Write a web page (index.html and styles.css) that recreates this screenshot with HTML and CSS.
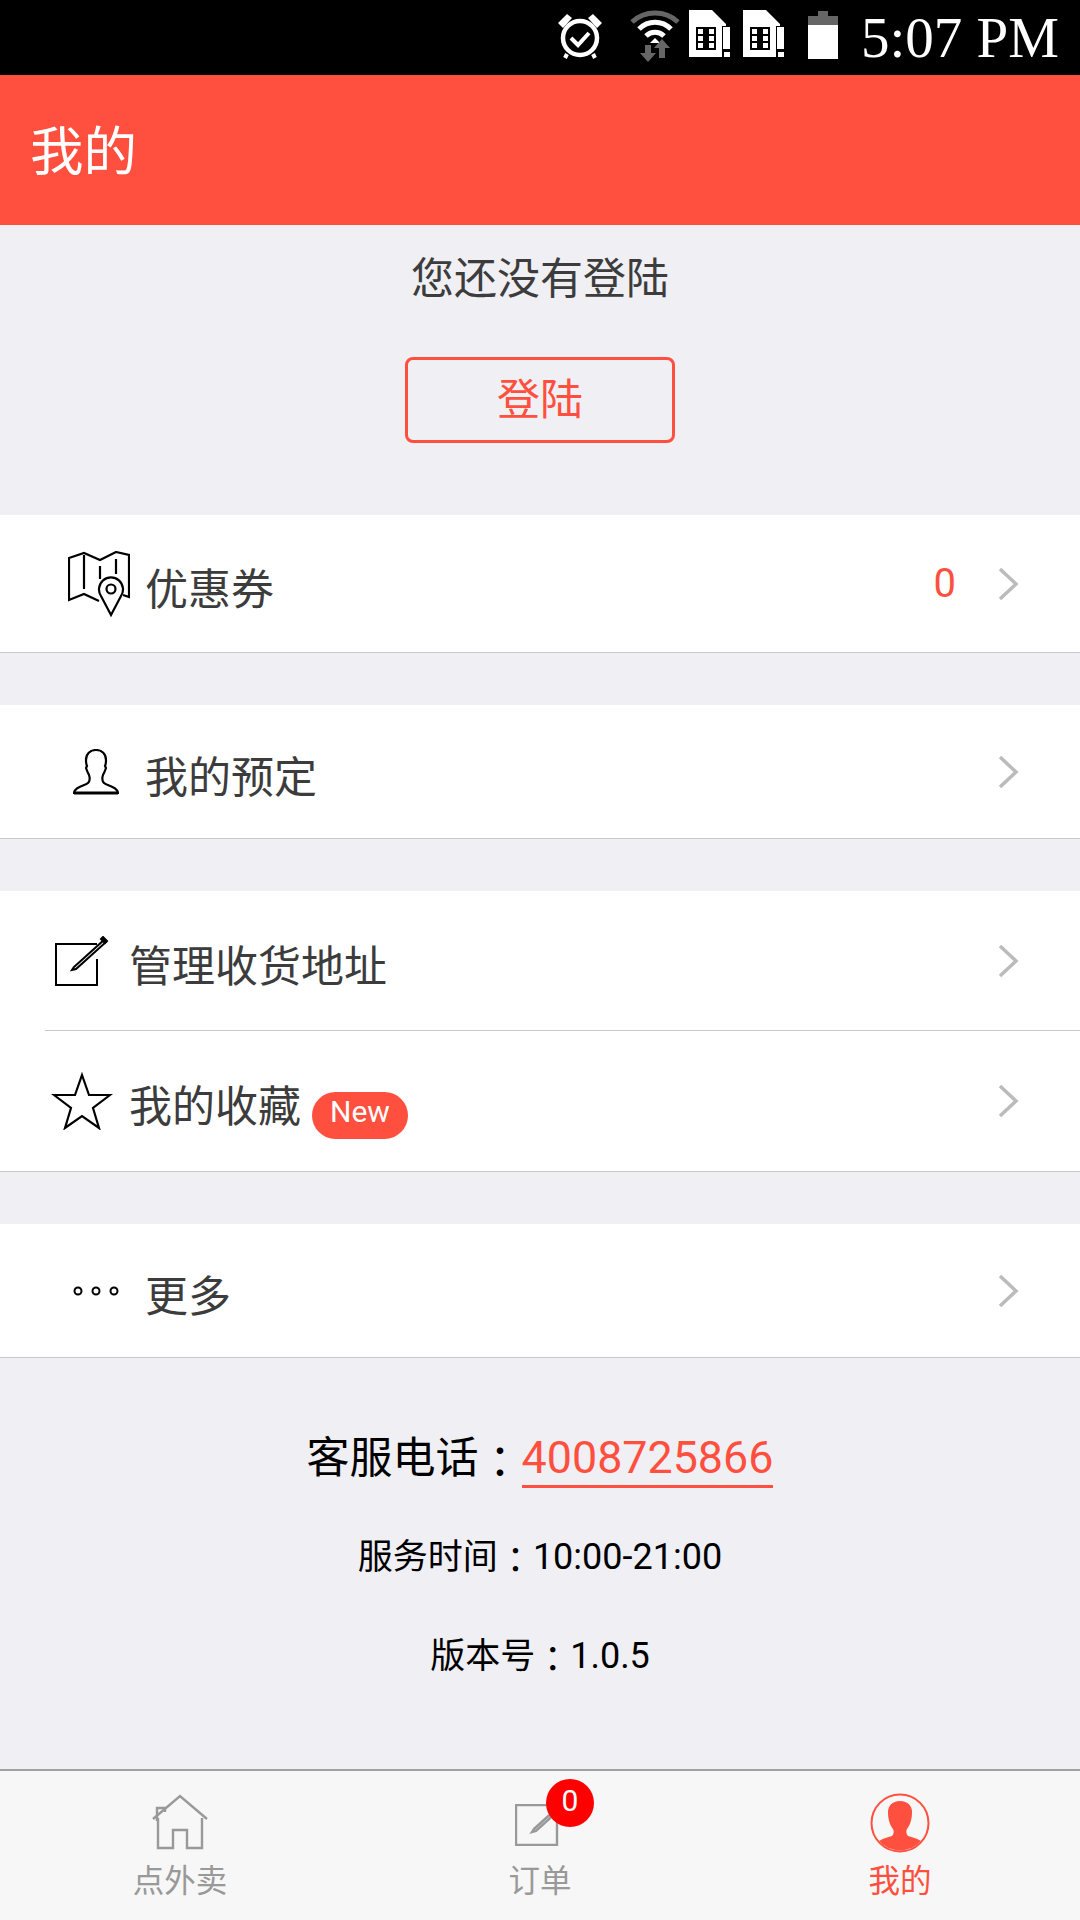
FILE: index.html
```html
<!DOCTYPE html>
<html lang="zh-CN">
<head>
  <meta charset="UTF-8">
  <title>我的</title>
  <link rel="stylesheet" href="styles.css">
</head>
<body>

<div class="app">

  <!-- status bar -->
  <div class="status-bar">
    <svg class="st-alarm" width="44" height="47" viewBox="0 0 44 47">
      <circle cx="22" cy="25" r="17" fill="none" stroke="#fff" stroke-width="4.5"/>
      <path d="M13 25l7 7 11-12" fill="none" stroke="#fff" stroke-width="4"/>
      <path d="M0 10L9 1l5 4-9 10zM44 10L35 1l-5 4 9 10z" fill="#fff"/>
      <path d="M9 41l-2 4M35 41l2 4" stroke="#fff" stroke-width="4"/>
    </svg>
    <svg class="st-wifi" width="50" height="53" viewBox="0 0 50 53">
      <path d="M2 13C15 1 35 1 48 13" fill="none" stroke="#666" stroke-width="5"/>
      <path d="M9 20C18 11 32 11 41 20M16 27C21 22 29 22 34 27" fill="none" stroke="#fff" stroke-width="5"/>
      <path d="M25 29l5 5H20z" fill="#fff"/>
      <path d="M15 36h6v8h5l-8 9-8-9h5z" fill="#666"/>
      <path d="M29 49h6v-10h5l-8-9-8 9h5z" fill="#666"/>
    </svg>
    <svg class="st-sim" width="41" height="47" viewBox="0 0 41 47"><use href="#sim"/></svg>
    <svg class="st-sim st-sim-last" width="41" height="47" viewBox="0 0 41 47"><use href="#sim"/></svg>
    <svg class="st-battery" width="30" height="48" viewBox="0 0 30 48">
      <path d="M10 0h10v5h10v43H0V5h10z" fill="#fff"/>
      <path d="M10 0h10v5h10v9H0V5h10z" fill="#666"/>
    </svg>
    <span class="st-time">5:07 PM</span>
  </div>

  <svg class="defs" width="0" height="0">
    <symbol id="sim" viewBox="0 0 41 47">
      <path d="M0 0h23l14 14v2h-4v31H0z" fill="#fff"/>
      <path d="M7 17h20v23H7z" fill="#000"/>
      <path d="M9 19h5v5H9zM9 26h5v5H9zM9 33h5v5H9zM20 19h5v5h-5zM20 26h5v5h-5zM20 33h5v5h-5z" fill="#fff"/>
      <path d="M34 17h7v22h-7zM35 42h6v5h-6z" fill="#fff"/>
    </symbol>
  </svg>

  <header class="title-bar">我的</header>

  <section class="login">
    <p class="login-tip">您还没有登陆</p>
    <button class="login-btn">登陆</button>
  </section>

  <div class="group">
    <div class="row row-first">
      <span class="icon-cell">
        <svg class="icon-map" width="62" height="66" viewBox="-1 -1 62 66" fill="none" stroke="#000" stroke-width="2.2">
          <path d="M30 49l-15-7L0 48V6l15-5 16 7L47 0l13 3v42l-6-2"/>
          <path d="M15 3v34M31 14v13M47 7v15"/>
          <path d="M42 63L32 44a12 12 0 1 1 20 0z" fill="#fff"/>
          <circle cx="42" cy="37" r="4.5"/>
        </svg>
      </span>
      <span class="row-text">优惠券</span>
      <span class="row-count">0</span>
      <svg class="chevron" width="22" height="34" viewBox="0 0 22 34"><path d="M2 2l16 15L2 32"/></svg>
    </div>
  </div>

  <div class="group">
    <div class="row">
      <span class="icon-cell">
        <svg width="46" height="46" viewBox="0 0 46 46" fill="none" stroke="#000" stroke-width="2.2">
          <path d="M23 1c-6 0-10 4-10 10 0 2 0 4 1 6l-1 2c1 3 2 5 3 7 1 3 1 6-1 8-3 3-13 3-14 10h44c-1-7-11-7-14-10-2-2-2-5-1-8 1-2 2-4 3-7l-1-2c1-2 1-4 1-6 0-6-4-10-10-10z"/>
          <path d="M1 44h44" stroke-width="3"/>
        </svg>
      </span>
      <span class="row-text">我的预定</span>
      <svg class="chevron" width="22" height="34" viewBox="0 0 22 34"><path d="M2 2l16 15L2 32"/></svg>
    </div>
  </div>

  <div class="group">
    <div class="row row-tall row-inset">
      <span class="icon-cell icon-cell-narrow">
        <svg width="54" height="50" viewBox="0 0 54 50" fill="none" stroke="#000" stroke-width="2">
          <path d="M42 8H1v41h41V23"/>
          <path d="M19 31l30-27 2 2-30 27-4 1z"/>
          <path d="M46 3l2-2 4 4-2 2z" fill="#000"/>
        </svg>
      </span>
      <span class="row-text">管理收货地址</span>
      <svg class="chevron" width="22" height="34" viewBox="0 0 22 34"><path d="M2 2l16 15L2 32"/></svg>
    </div>
    <div class="row row-tall">
      <span class="icon-cell icon-cell-narrow">
        <svg width="62" height="58" viewBox="0 0 62 58" fill="none" stroke="#000" stroke-width="2.2">
          <path d="M31 3l7 20h21L42 36l6 20-17-12-17 12 6-20L3 23h21z"/>
        </svg>
      </span>
      <span class="row-text">我的收藏</span>
      <span class="new-tag">New</span>
      <svg class="chevron" width="22" height="34" viewBox="0 0 22 34"><path d="M2 2l16 15L2 32"/></svg>
    </div>
  </div>

  <div class="group">
    <div class="row">
      <span class="icon-cell">
        <svg width="46" height="10" viewBox="0 0 46 10" fill="none" stroke="#000" stroke-width="2">
          <circle cx="5" cy="5" r="3.5"/>
          <circle cx="23" cy="5" r="3.5"/>
          <circle cx="41" cy="5" r="3.5"/>
        </svg>
      </span>
      <span class="row-text">更多</span>
      <svg class="chevron" width="22" height="34" viewBox="0 0 22 34"><path d="M2 2l16 15L2 32"/></svg>
    </div>
  </div>

  <section class="info">
    <p class="info-phone">客服电话<span class="colon" lang="zh-TW">：</span><a class="phone-link">4008725866</a></p>
    <p class="info-line info-line-first">服务时间<span class="colon" lang="zh-TW">：</span><span class="num">10:00-21:00</span></p>
    <p class="info-line">版本号<span class="colon" lang="zh-TW">：</span><span class="num">1.0.5</span></p>
  </section>

  <nav class="tab-bar">
    <div class="tab">
      <svg class="tab-home" width="56" height="56" viewBox="0 0 56 56" fill="none" stroke="#999" stroke-width="2.4">
        <path d="M1 25L28 2l27 23"/>
        <path d="M5 27V14h8v4"/>
        <path d="M6 24v30h15V36h14v18h15V24"/>
      </svg>
      <span class="tab-label">点外卖</span>
    </div>
    <div class="tab">
      <span class="tab-icon-wrap">
        <svg width="44" height="42" viewBox="0 0 44 42" fill="none" stroke="#999" stroke-width="2.4">
          <path d="M42 1H1v40h41V14"/>
          <path d="M19 25l22-20 2 2-22 20-4 1z"/>
        </svg>
        <span class="tab-badge">0</span>
      </span>
      <span class="tab-label">订单</span>
    </div>
    <div class="tab tab-active">
      <svg class="tab-me" width="60" height="60" viewBox="0 0 60 60">
        <circle cx="30" cy="30" r="28.5" fill="none" stroke="#ff4f3e" stroke-width="2"/>
        <path d="M30 8c-8 0-12 5-12 11 0 8 2 13 5 17 1 2 1 5-1 7-3 1-8 2-13 5a28 28 0 0 0 42 0c-5-3-10-4-13-5-2-2-2-5-1-7 3-4 5-9 5-17 0-6-4-11-12-11z" fill="#ff4f3e"/>
      </svg>
      <span class="tab-label">我的</span>
    </div>
  </nav>

</div>

</body>
</html>
```

FILE: styles.css
```css
* {
  box-sizing: border-box;
}

html, body {
  margin: 0;
  padding: 0;
}

body {
  font-family: Roboto, 'Noto Sans CJK SC', sans-serif;
  background: #efeff4;
  color: #000;
}

p {
  margin: 0;
}

.app {
  width: 1080px;
  height: 1920px;
  display: flex;
  flex-direction: column;
  overflow: hidden;
}

.defs {
  position: absolute;
}

.colon {
  font-family: 'Noto Sans CJK TC', sans-serif;
  line-height: 1;
  position: relative;
  top: 0.12em;
}

/* status bar */
.status-bar {
  height: 75px;
  background: #000;
  display: flex;
  align-items: flex-start;
  justify-content: flex-end;
  padding-right: 21px;
}

.st-alarm {
  margin-top: 13px;
  margin-right: 28px;
}

.st-wifi {
  margin-top: 9px;
  margin-right: 9px;
}

.st-sim {
  margin-top: 10px;
  margin-right: 13px;
}

.st-sim-last {
  margin-right: 24px;
}

.st-battery {
  margin-top: 11px;
  margin-right: 23px;
}

.st-time {
  font-family: 'Liberation Serif', serif;
  font-size: 57px;
  line-height: 75px;
  color: #fff;
}

/* title */
.title-bar {
  height: 150px;
  background: #ff4f3e;
  color: #fff;
  font-size: 53.5px;
  line-height: 156px;
  padding-left: 30px;
}

/* login */
.login {
  height: 290px;
  display: flex;
  flex-direction: column;
  align-items: center;
  padding-top: 26px;
}

.login-tip {
  font-size: 43px;
  line-height: 56px;
  color: #3c3c3c;
}

.login-btn {
  width: 270px;
  height: 86px;
  margin-top: 50px;
  padding: 0 0 8px;
  background: transparent;
  border: 3px solid #ff4f3e;
  border-radius: 8px;
  color: #ff4f3e;
  font-family: inherit;
  font-size: 43px;
}

/* list */
.group {
  background: #fff;
  border-bottom: 1px solid #c8c7cc;
  margin-bottom: 52px;
}

.row {
  height: 133px;
  padding-left: 45px;
  padding-right: 60px;
  display: flex;
  align-items: center;
}

.row-first {
  height: 137px;
}

.row-tall {
  height: 140px;
}

.row-inset {
  margin-left: 45px;
  padding-left: 0;
  border-bottom: 1px solid #c8c7cc;
}

.icon-cell {
  width: 100px;
  padding-left: 2px;
  display: flex;
  justify-content: center;
  flex-shrink: 0;
}

.icon-cell-narrow {
  width: 74px;
  padding-left: 0;
  margin-right: 10px;
}

.icon-map {
  margin-left: 5px;
}

.row-text {
  font-size: 43px;
  color: #3c3c3c;
  position: relative;
  top: 2px;
}

.row-count {
  margin-left: auto;
  font-size: 40px;
  color: #ff4f3e;
  margin-right: 42px;
}

.chevron {
  margin-left: auto;
  fill: none;
  stroke: #bbb;
  stroke-width: 3.5;
}

.row-count + .chevron {
  margin-left: 0;
}

.new-tag {
  width: 96px;
  height: 47px;
  margin-left: 11px;
  margin-top: 28px;
  border-radius: 24px;
  background: #ff4f3e;
  color: #fff;
  font-size: 30px;
  line-height: 40px;
  text-align: center;
}

/* info */
.info {
  flex: 1;
  text-align: center;
  margin-top: -52px;
  padding-top: 72px;
}

.info-phone {
  font-size: 43px;
  line-height: 56px;
}

.phone-link {
  color: #ff4f3e;
  border-bottom: 3px solid #ff4f3e;
  font-size: 44.8px;
  padding-bottom: 1px;
}

.info-line {
  font-size: 35px;
  line-height: 48px;
  margin-top: 50px;
}

.info-line-first {
  margin-top: 47px;
}

.num {
  font-size: 36px;
}

/* tabs */
.tab-bar {
  height: 151px;
  background: #f7f7f7;
  border-top: 2px solid #a0a0a0;
  display: grid;
  grid-template-columns: repeat(3, 1fr);
}

.tab {
  display: flex;
  flex-direction: column;
  align-items: center;
  justify-content: flex-end;
  padding-bottom: 18px;
  color: #999;
}

.tab-active {
  color: #ff4f3e;
}

.tab-home {
  margin-bottom: 2px;
}

.tab-me {
  margin-bottom: -1px;
}

.tab-icon-wrap {
  position: relative;
  display: block;
  height: 42px;
  margin-bottom: 6px;
  margin-left: -6px;
}

.tab-badge {
  position: absolute;
  left: 31px;
  top: -25px;
  width: 48px;
  height: 48px;
  border-radius: 50%;
  background: #f00;
  color: #fff;
  font-size: 30px;
  line-height: 44px;
  text-align: center;
}

.tab-label {
  font-size: 31.5px;
  line-height: 40px;
  margin-top: 10px;
}
```
